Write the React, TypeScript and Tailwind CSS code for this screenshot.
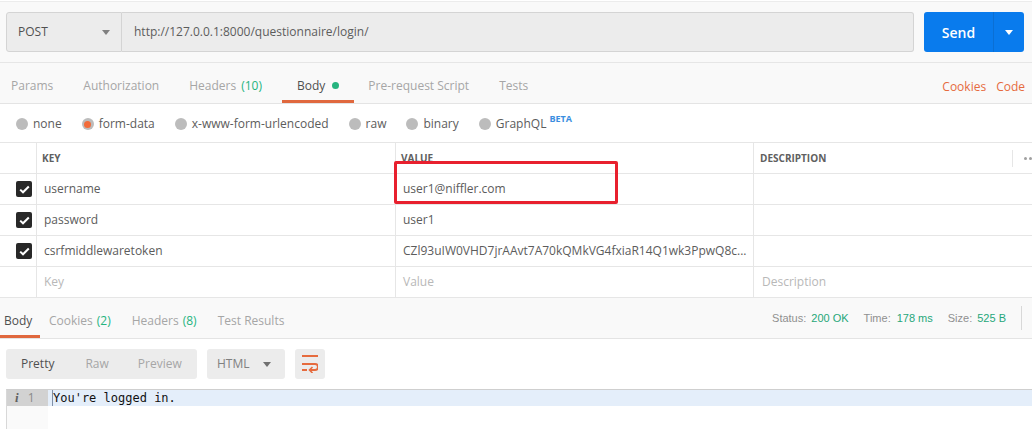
const font = { fontFamily: '"Open Sans", sans-serif' };

const radios = [
  { label: "none", mr: "mr-[20px]" },
  { label: "form-data", active: true, mr: "mr-[20px]" },
  { label: "x-www-form-urlencoded", mr: "mr-[20px]" },
  { label: "raw", mr: "mr-[20px]" },
  { label: "binary", mr: "mr-[20px]" },
  { label: "GraphQL", mr: "mr-[3px]" },
];

const rows = [
  { key: "username", value: "user1@niffler.com" },
  { key: "password", value: "user1" },
  { key: "csrfmiddlewaretoken", value: "CZl93uIW0VHD7jrAAvt7A70kQMkVG4fxiaR14Q1wk3PpwQ8c..." },
];

function Caret({ className }: { className: string }) {
  return (
    <svg width="8" height="5" viewBox="0 0 8 5" className={className}>
      <path d="M0 0h8L4 5z" fill="currentColor" />
    </svg>
  );
}

function Check() {
  return (
    <div className="w-4 h-4 rounded-[2px] bg-[#282828] flex items-center justify-center">
      <svg width="11" height="9" viewBox="0 0 11 9" fill="none">
        <path d="M1.2 4.6 4 7.3 9.8 1.5" stroke="#fff" strokeWidth="2" />
      </svg>
    </div>
  );
}

export default function App() {
  return (
    <div className="relative w-[1032px] h-[429px] overflow-hidden bg-white text-[12px] text-[#5c5c5c]" style={font}>
      <div className="h-px" />
      {/* request bar */}
      <div className="h-[62px] bg-[#f9f9f9] border-t border-t-[#ececec] border-b border-b-[#e6e6e6] flex pt-[10px] pl-[6px]">
        <div className="w-[116px] h-10 bg-[#ececec] border border-[#d4d4d4] rounded-l-[3px] flex items-center pl-[11px] pr-[11px] justify-between">
          <span className="text-[12px] font-medium text-[#505050]">POST</span>
          <Caret className="text-[#808080]" />
        </div>
        <div className="w-[792px] h-10 bg-[#ececec] border border-l-0 border-[#d4d4d4] rounded-r-[3px] flex items-center pl-3 text-[12px]">
          http://127.0.0.1:8000/questionnaire/login/
        </div>
        <div className="ml-[10px] w-[100px] h-10 bg-[#097bed] rounded-[3px] flex text-white">
          <div className="w-[69px] flex items-center justify-center text-[14px] font-semibold">Send</div>
          <div className="flex-1 border-l border-[#0a6fd4] flex items-center justify-center">
            <Caret className="text-white" />
          </div>
        </div>
      </div>

      {/* request tabs */}
      <div className="h-[41px] bg-[#f9f9f9] border-b border-[#e4e4e4] flex items-center justify-between text-[12px] pr-[7px]">
        <div className="flex h-full -ml-1 text-[#a6a6a6]">
          <div className="px-[15px] pt-[5px] flex items-center">Params</div>
          <div className="px-[15px] pt-[5px] flex items-center">Authorization</div>
          <div className="px-[15px] pt-[5px] flex items-center">
            Headers <span className="text-[#26b47f] ml-[5px]">(10)</span>
          </div>
          <div className="relative ml-[5px] px-[15px] pt-[5px] flex items-center text-[#505050]">
            Body
            <span className="ml-[7px] w-[7px] h-[7px] rounded-full bg-[#26b47f]" />
            <span className="absolute left-0 right-0 bottom-0 h-[3px] bg-[#e0683e]" />
          </div>
          <div className="-ml-px px-[15px] pt-[5px] flex items-center">Pre-request Script</div>
          <div className="px-[15px] pt-[5px] flex items-center">Tests</div>
        </div>
        <div className="flex gap-[10px] text-[#e66b3e] pt-[7px]">
          <span>Cookies</span>
          <span>Code</span>
        </div>
      </div>

      {/* body types */}
      <div className="h-[39px] flex items-center pl-4 pt-[2px] text-[12px] border-b border-[#e6e6e6]">
        {radios.map((r) => (
          <div key={r.label} className={`flex items-center ${r.mr}`}>
            <span className="w-3 h-3 rounded-full bg-[#bcbcbc] flex items-center justify-center mr-[5px]">
              {r.active && <span className="w-[7px] h-[7px] rounded-full bg-[#f26b3a]" />}
            </span>
            {r.label}
          </div>
        ))}
        <span className="text-[9px] font-bold text-[#3b8ee0] self-start mt-[6px]">BETA</span>
      </div>

      {/* params table */}
      <div className="grid grid-cols-[37px_359px_358px_1fr] border-b border-[#e6e6e6]">
        <div className="h-[31px] border-b border-r border-[#e6e6e6]" />
        <div className="h-[31px] border-b border-r border-[#e6e6e6] pl-[5px] flex items-center text-[10px] font-bold text-[#606060]">KEY</div>
        <div className="h-[31px] border-b border-r border-[#e6e6e6] pl-[5px] flex items-center text-[10px] font-bold text-[#606060]">VALUE</div>
        <div className="h-[31px] border-b border-[#e6e6e6] pl-[6px] flex items-center text-[10px] font-bold text-[#606060]">
          <span className="w-[252px]">DESCRIPTION</span>
          <span className="w-px h-[17px] bg-[#e6e6e6]" />
          <span className="ml-[11px] flex gap-[2px]">
            <span className="w-[3px] h-[3px] rounded-full bg-[#a0a0a0]" />
            <span className="w-[3px] h-[3px] rounded-full bg-[#a0a0a0]" />
            <span className="w-[3px] h-[3px] rounded-full bg-[#a0a0a0]" />
          </span>
        </div>
        {rows.map((row) => (
          <div key={row.key} className="contents">
            <div className="h-[31px] border-b border-r border-[#e6e6e6] flex items-center pl-4"><Check /></div>
            <div className="h-[31px] border-b border-r border-[#e6e6e6] pl-[7px] flex items-center">{row.key}</div>
            <div className="h-[31px] border-b border-r border-[#e6e6e6] pl-[7px] flex items-center whitespace-nowrap overflow-hidden">{row.value}</div>
            <div className="h-[31px] border-b border-[#e6e6e6]" />
          </div>
        ))}
        <div className="h-[30px] border-r border-[#e6e6e6]" />
        <div className="h-[30px] border-r border-[#e6e6e6] pl-[7px] flex items-center text-[#b8b8b8]">Key</div>
        <div className="h-[30px] border-r border-[#e6e6e6] pl-[7px] flex items-center text-[#b8b8b8]">Value</div>
        <div className="h-[30px] pl-2 flex items-center text-[#b8b8b8]">Description</div>
      </div>

      {/* response tabs */}
      <div className="h-[41px] bg-[#f9f9f9] border-b border-[#e4e4e4] flex items-center justify-between text-[12px]">
        <div className="flex h-full text-[#a6a6a6] gap-[21px]">
          <div className="relative w-10 pl-1 pt-[6px] flex items-center text-[#505050]">
            Body
            <span className="absolute left-0 right-0 bottom-0 h-[3px] bg-[#e0683e]" />
          </div>
          <div className="flex items-center -ml-3 pt-[6px]">
            Cookies <span className="text-[#26b47f] ml-1">(2)</span>
          </div>
          <div className="flex items-center pt-[6px]">
            Headers <span className="text-[#26b47f] ml-1">(8)</span>
          </div>
          <div className="flex items-center pt-[6px]">Test Results</div>
        </div>
        <div className="flex items-center text-[11px] pr-[10px]" style={{ fontFamily: '"Liberation Sans", sans-serif' }}>
          <span className="text-[#909090]">Status:</span>
          <span className="text-[#26a77a] ml-[5px]">200 OK</span>
          <span className="text-[#909090] ml-[15px]">Time:</span>
          <span className="text-[#26a77a] ml-[6px]">178 ms</span>
          <span className="text-[#909090] ml-[15px]">Size:</span>
          <span className="text-[#26a77a] ml-[5px]">525 B</span>
          <span className="w-px h-6 bg-[#d8d8d8] ml-[15px]" />
        </div>
      </div>

      {/* response toolbar */}
      <div className="h-[50px] flex items-center pl-[6px]">
        <div className="w-[191px] h-[30px] bg-[#ececec] rounded-[3px] flex items-center pl-[15px] text-[#a6a6a6]">
          <span className="text-[#505050]">Pretty</span>
          <span className="ml-[31px]">Raw</span>
          <span className="ml-[29px]">Preview</span>
        </div>
        <div className="ml-[10px] w-[78px] h-[30px] bg-[#ececec] rounded-[3px] flex items-center justify-between pl-[10px] pr-[14px] text-[#808080]">
          <span>HTML</span>
          <Caret className="text-[#707070]" />
        </div>
        <div className="ml-[10px] w-[30px] h-[30px] bg-[#ececec] rounded-[3px] flex items-center justify-center">
          <svg width="16" height="18" viewBox="0 0 16 18" fill="none" stroke="#e66b3e" strokeWidth="2">
            <path d="M0 1h16M0 9h13a2.8 2.8 0 0 1 0 6H8M0 15h5" />
            <path d="M10.5 12 7.5 15l3 3" strokeWidth="1.6" />
          </svg>
        </div>
      </div>

      {/* editor */}
      <div className="ml-[6px] h-[40px] border-t border-t-[#cfcfcf] border-l border-l-[#d8d8d8] flex">
        <div className="w-[41px] h-full bg-[#fafafa]">
          <div className="h-4 bg-[#d2d2d2] flex items-center text-[#8a8a8a] text-[12px]">
            <span className="ml-2 italic font-bold text-[13px] text-[#606060]" style={{ fontFamily: '"Liberation Serif", serif' }}>i</span>
            <span className="ml-[9px]">1</span>
          </div>
        </div>
        <div className="flex-1">
          <div className="h-4 bg-[#e4eefa] flex items-center pl-[4px] text-[12px] leading-4 text-[#111]" style={{ fontFamily: '"DejaVu Sans Mono", monospace' }}>
            <span className="border-l border-[#8090a8]">You're logged in.</span>
          </div>
        </div>
      </div>

      {/* annotation drawn over the screenshot */}
      <div className="absolute left-[394px] top-[161px] w-[224px] h-[43px] border-[3px] border-[#e8202e] rounded-[2px]" />
    </div>
  );
}
